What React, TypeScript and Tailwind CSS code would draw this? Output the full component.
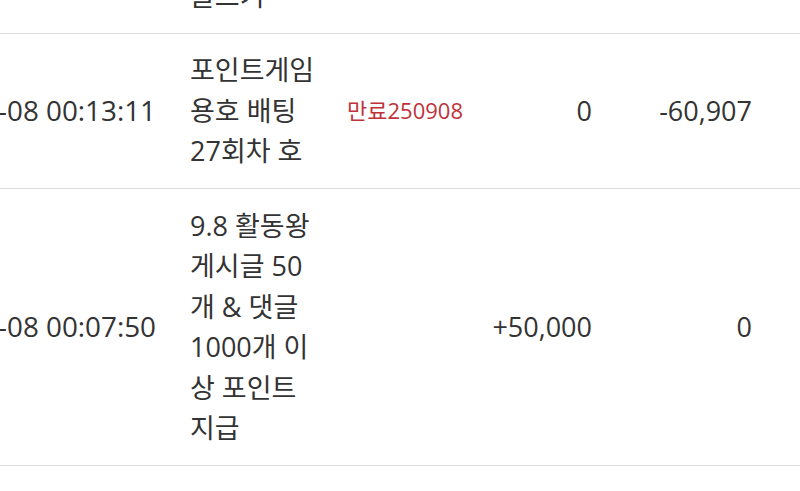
const rows = [
  {
    date: '2025-09-08 00:21:02',
    desc: ['포인트게임', '룰렛 참여', '글쓰기'],
    note: '',
    plus: '0',
    balance: '-10,000',
  },
  {
    date: '2025-09-08 00:13:11',
    desc: ['포인트게임', '용호 배팅', '27회차 호'],
    note: '만료250908',
    plus: '0',
    balance: '-60,907',
  },
  {
    date: '2025-09-08 00:07:50',
    desc: ['9.8 활동왕', '게시글 50', '개 & 댓글', '1000개 이', '상 포인트', '지급'],
    note: '',
    plus: '+50,000',
    balance: '0',
  },
  {
    date: '2025-09-07 23:58:40',
    desc: ['출첵 보상', '포인트 지급'],
    note: '',
    plus: '+1,000',
    balance: '0',
  },
]

export default function App() {
  return (
    <div
      className="w-[800px] h-[491px] overflow-hidden bg-white text-[#333333]"
      style={{ fontFamily: '"Open Sans", "Noto Sans CJK KR", sans-serif' }}
    >
      {/* 스크롤된 상태라 첫 행은 위로 잘려 있음 */}
      <div className="mt-[-122px] ml-[-167px] w-[1000px]">
        {rows.map((r, i) => (
          <div key={i} className="flex items-start border-b border-[#dddddd]">
            <div className="w-[356px] shrink-0 self-center flex justify-end pr-[33px] text-[27.8px] whitespace-nowrap">
              {r.date}
            </div>
            <div
              className={
                i === rows.length - 1
                  ? 'w-[158px] shrink-0 pl-[1px] pt-[20px] pb-[16.5px] text-[27px] leading-[40.5px]'
                  : 'w-[158px] shrink-0 pl-[1px] py-[16.5px] text-[27px] leading-[40.5px]'
              }
            >
              {r.desc.map((line, j) => (
                <div key={j} className="whitespace-nowrap">{line}</div>
              ))}
            </div>
            <div className="w-[130px] shrink-0 self-center text-[22px] text-[#c0323b] whitespace-nowrap">{r.note}</div>
            <div className="w-[115px] shrink-0 self-center text-right text-[27px]">{r.plus}</div>
            <div className="w-[160px] shrink-0 self-center text-right text-[27px]">{r.balance}</div>
          </div>
        ))}
      </div>
    </div>
  )
}
